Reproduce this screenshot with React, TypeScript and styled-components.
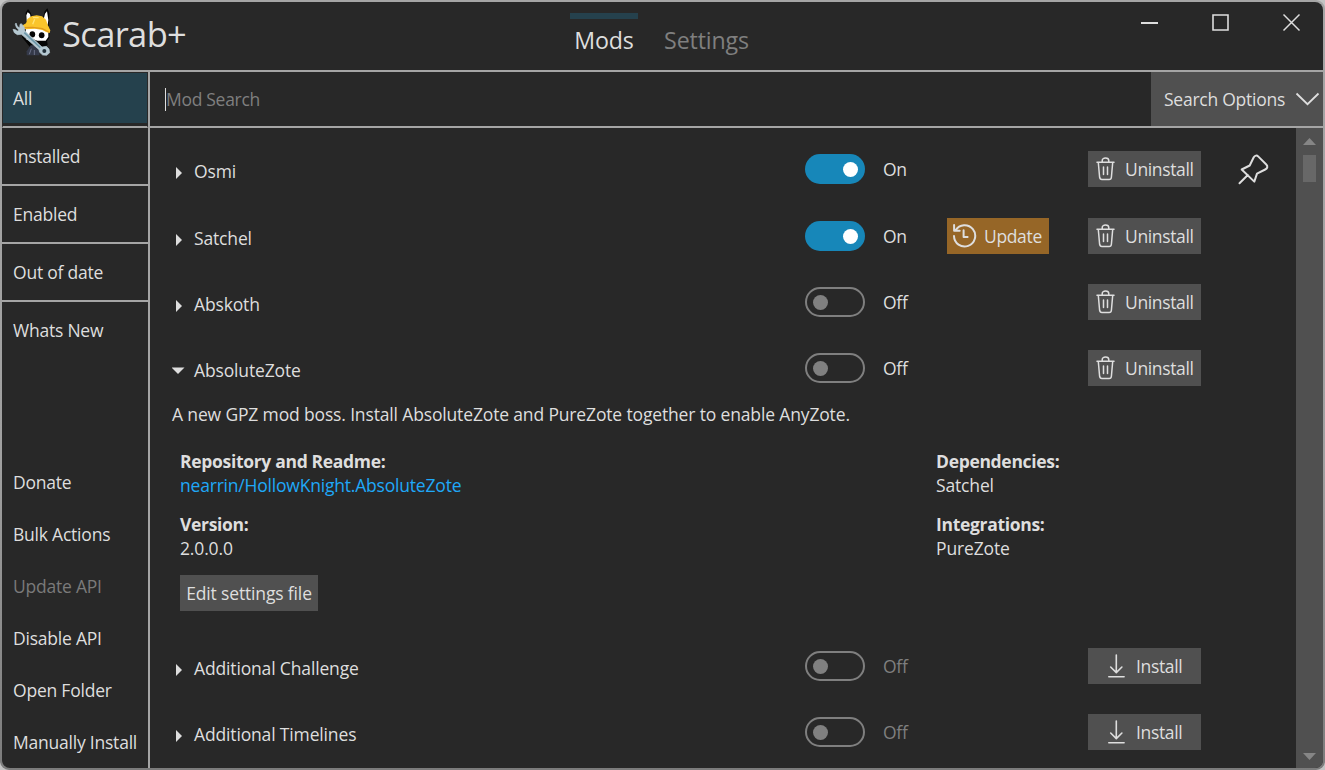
import React from "react";
import styled, { createGlobalStyle } from "styled-components";

const LINE = "#a5a5a5";
const BG = "#282828";
const PANEL = "#505050";
const TEXT = "#dedede";
const MUTED = "#7f7f7f";

const GlobalStyle = createGlobalStyle`
  * { box-sizing: border-box; }
  body { margin: 0; background: #c4c4c4; }
  button { font: inherit; color: inherit; border: 0; padding: 0; background: none; letter-spacing: inherit; }
`;

const Window = styled.div`
  width: 1325px;
  height: 770px;
  padding: 2px;
  border-radius: 9px;
  background: linear-gradient(#a5a5a5, #a0a0a0 60%, #7c7c7c);
  font-family: "Open Sans", "Noto Sans", sans-serif;
  font-size: 17.5px;
  line-height: 24px;
  letter-spacing: -0.15px;
  color: ${TEXT};
  white-space: nowrap;
`;

const Frame = styled.div`
  display: flex;
  flex-direction: column;
  height: 766px;
  overflow: hidden;
  border-radius: 8px;
  background: ${BG};
`;

const Header = styled.header`
  display: grid;
  grid-template-columns: 568px 1fr 190px;
  height: 70px;
  border-bottom: 2px solid ${LINE};
`;

const Brand = styled.div`
  display: flex;
  align-items: flex-start;
`;

const Title = styled.h1`
  margin: 9px 0 0;
  font-size: 34.5px;
  line-height: 46px;
  font-weight: 400;
  letter-spacing: -0.65px;
`;

const Tabs = styled.nav`
  display: flex;
  gap: 22px;
  padding-top: 11px;
`;

const Tab = styled.button<{ $active?: boolean }>`
  display: flex;
  flex-direction: column;
  align-items: center;
  height: 50px;
  width: ${(p) => (p.$active ? 68 : 93)}px;
  border-top: 6px solid ${(p) => (p.$active ? "#25414d" : "transparent")};
  color: ${(p) => (p.$active ? TEXT : MUTED)};
  font-size: 23.2px;
  line-height: 42px;
`;

const WindowControls = styled.div`
  display: flex;
  justify-content: space-between;
  padding: 11px 22px 0 7px;
  height: 32px;
`;

const Body = styled.div`
  display: flex;
  flex: 1;
  min-height: 0;
`;

const Sidebar = styled.aside`
  display: flex;
  flex-direction: column;
  width: 148px;
  border-right: 2px solid ${LINE};
  letter-spacing: -0.22px;
`;

const Filter = styled.button<{ $active?: boolean; $last?: boolean }>`
  height: ${(p) => (p.$active ? 56 : 58)}px;
  padding: ${(p) => (p.$active ? "0 0 3px 10px" : "0 0 0 11px")};
  border: ${(p) => (p.$active ? `1px solid ${BG}` : 0)};
  border-bottom: 2px solid ${(p) => (p.$last ? "transparent" : LINE)};
  background: ${(p) => (p.$active ? `linear-gradient(#25414d 50px, ${BG} 50px)` : "none")};
  text-align: left;
`;

const SideActions = styled.div`
  display: flex;
  flex-direction: column;
  margin-top: auto;
`;

const SideAction = styled.button<{ $disabled?: boolean }>`
  height: 52px;
  padding-left: 11px;
  text-align: left;
  color: ${(p) => (p.$disabled ? "#7a7a7a" : TEXT)};
`;

const Main = styled.main`
  display: flex;
  flex: 1;
  flex-direction: column;
  min-width: 0;
`;

const SearchBar = styled.div`
  display: flex;
  height: 56px;
  border-bottom: 2px solid ${LINE};
`;

const SearchField = styled.div`
  display: flex;
  flex: 1;
  align-items: center;
  padding-left: 15px;
  color: ${MUTED};
  letter-spacing: -0.3px;
`;

const Caret = styled.span`
  width: 1px;
  height: 23px;
  background: ${TEXT};
`;

const SearchOptions = styled.button`
  display: flex;
  align-items: center;
  justify-content: space-between;
  width: 172px;
  padding: 0 3px 0 13px;
  letter-spacing: -0.25px;
  background: ${PANEL};
`;

const Content = styled.div`
  display: flex;
  flex: 1;
  min-height: 0;
`;

const ModList = styled.div`
  flex: 1;
  padding: 23px 0 0 22px;
  overflow: hidden;
`;

const Row = styled.div<{ $gap: number }>`
  display: grid;
  grid-template-columns: 22px 611px 78px 64px 141px 113px 1fr;
  align-items: center;
  height: 36px;
  margin-bottom: ${(p) => p.$gap}px;
`;

const ArrowCell = styled.span`
  display: flex;
  padding-top: 7px;
`;

const Name = styled.span`
  padding-top: 3px;
`;

const Track = styled.span<{ $on: boolean }>`
  display: flex;
  align-items: center;
  justify-content: ${(p) => (p.$on ? "flex-end" : "flex-start")};
  width: 60px;
  height: 30px;
  padding: ${(p) => (p.$on ? "1px 7px 0" : "0 6px")};
  border: ${(p) => (p.$on ? 0 : "2px solid #7f7f7f")};
  border-radius: 15px;
  background: ${(p) => (p.$on ? "#1787b9" : "transparent")};
`;

const Knob = styled.span<{ $on: boolean }>`
  width: 15px;
  height: 15px;
  border-radius: 50%;
  background: ${(p) => (p.$on ? "#fff" : "#808080")};
`;

const State = styled.span<{ $dim?: boolean }>`
  padding-bottom: 1px;
  letter-spacing: -0.3px;
  color: ${(p) => (p.$dim ? MUTED : TEXT)};
`;

const ActionButton = styled.button<{ $tone?: "update" | "install" }>`
  display: flex;
  align-items: center;
  height: 36px;
  gap: ${(p) => (p.$tone === "update" ? 7 : p.$tone === "install" ? 11 : 9)}px;
  width: ${(p) => (p.$tone === "update" ? 102 : 113)}px;
  padding-left: ${(p) => (p.$tone === "update" ? 5 : p.$tone === "install" ? 20 : 7)}px;
  background: ${(p) => (p.$tone === "update" ? "#966627" : PANEL)};
  letter-spacing: -0.35px;
`;

const PinCell = styled.span`
  display: flex;
  padding-left: 36px;
`;

const Details = styled.section`
  height: 232px;
  margin-bottom: 30px;
  margin-top: -30px;
  padding-top: 16px;
`;

const Columns = styled.div`
  display: grid;
  grid-template-columns: 756px 1fr;
  padding: 23px 0 0 8px;
`;

const Field = styled.div`
  display: flex;
  flex-direction: column;
  height: 63px;
`;

const Caption = styled.strong`
  font-size: 17.5px;
  letter-spacing: -0.32px;
`;

const Link = styled.a`
  color: #1fa8f8;
  letter-spacing: -0.2px;
`;

const EditButton = styled.button`
  display: block;
  width: 138px;
  height: 36px;
  margin-left: 8px;
  background: ${PANEL};
`;

const ScrollBar = styled.div`
  display: flex;
  flex-direction: column;
  align-items: center;
  width: 27px;
  padding: 10px 0 8px;
  background: ${PANEL};
`;

const Thumb = styled.div`
  width: 13px;
  height: 27px;
  margin: 10px 0 auto;
  background: #686868;
`;

const Logo = () => (
  <svg width="60" height="64" viewBox="6 6 180 192">
    <path d="M78 72 77 38 84 27 92 38 98 56 128 56 134 34 142 25 148 40 146 78Z" fill="#050505" />
    <path d="M80 64 79 46 83 37 90 42 94 60ZM131 58 135 41 141 34 145 60 143 76Z" fill="#fff" />
    <path d="M72 84H148V114L141 123 143 134 132 145 108 132 92 144 66 112Z" fill="#050505" />
    <path d="M77 84H145V111L137 122H112L100 118 80 120Z" fill="#fff" />
    <ellipse cx="97" cy="103" rx="8.5" ry="9.5" fill="#050505" />
    <ellipse cx="125" cy="106" rx="8.5" ry="9" fill="#050505" />
    <path d="M92 136 80 154V166H118L120 152 106 136Z" fill="#343949" />
    <path d="m94 146-6 17m15-13v15" stroke="#6a7086" strokeWidth="3" />
    <path d="M68 76 78 70 82 57 94 49 110 46 126 49 138 59 143 74 151 91 149 99 138 96 127 90 105 86 78 88 66 84Z" fill="#fac52b" />
    <path d="m70 83 28-1 29 4 19 10" fill="none" stroke="#e09a1c" strokeWidth="4" />
    <path d="M99 53h17m-12 5-6 15" stroke="#ffe373" strokeWidth="4" />
    <path d="M48 69 52 79 59 84 60 73 64 71 72 80 75 93 126 141 139 139 147 147 149 158 140 166 128 165 119 157 117 149 64 103 52 104 43 98 39 88 46 89 52 93 57 91 49 82 46 73Z" fill="#b5c8d1" stroke="#b5c8d1" strokeWidth="2" />
    <path d="m73 98 48 45" stroke="#6d98aa" strokeWidth="5" />
    <circle cx="133" cy="153" r="6" fill="#22313b" />
  </svg>
);

const Arrow = ({ open }: { open?: boolean }) => (
  <svg width="14" height="12" viewBox="0 0 14 12">
    <path d={open ? "M-.5 1.5H12.5L6 8Z" : "M4 0 10 6 4 12Z"} fill={TEXT} />
  </svg>
);

const TrashIcon = () => (
  <svg width="21" height="26" viewBox="0 0 21 26" fill="none" stroke={TEXT} strokeWidth="1.5" strokeLinecap="round" strokeLinejoin="round">
    <path d="M2 6.2h17M7.2 6V4.7c0-1.6 1.3-2.7 3.3-2.7s3.3 1.1 3.3 2.7V6M3.3 6.5l1.3 14.7c.2 1.5 1 2.3 2.3 2.3h7.2c1.4 0 2.2-.8 2.3-2.3l1.3-14.7M8.5 11v7.5M12.5 11v7.5" />
  </svg>
);

const HistoryIcon = () => (
  <svg width="25" height="26" viewBox="0 0 25 26" fill="none" stroke={TEXT} strokeWidth="2" strokeLinecap="round" strokeLinejoin="round">
    <path d="M3.6 7.3A10.6 10.6 0 1 1 2 13M2.1 2v5.7h5.6M11.6 7.3V14h4" />
  </svg>
);

const DownloadIcon = () => (
  <svg width="17" height="24" viewBox="0 0 17 24" fill="none" stroke={TEXT} strokeWidth="1.6" strokeLinecap="round" strokeLinejoin="round">
    <path d="M8.3 1v17.5M2.7 13l5.6 5.6 5.6-5.6M.8 22.7h15.3" />
  </svg>
);

const PinIcon = () => (
  <svg width="32" height="32" viewBox="0 0 32 32" fill="none" stroke={TEXT} strokeWidth="2" strokeLinecap="round" strokeLinejoin="round">
    <path d="M2.5 30.3 10.8 22M4.7 16.5 17.3 28.6 20 20.6 28.2 16.5C30.6 15.3 31 13.3 29.3 11.5L21.4 3.6C19.8 2 17.8 2.3 16.6 4.5L12.7 12.5Z" />
  </svg>
);

interface Mod {
  name: string;
  on?: boolean;
  installed?: boolean;
  update?: boolean;
  pinned?: boolean;
  open?: boolean;
  gap?: number;
}

const mods: Mod[] = [
  { name: "Osmi", on: true, installed: true, pinned: true, gap: 31 },
  { name: "Satchel", on: true, installed: true, update: true },
  { name: "Abskoth", installed: true },
  { name: "AbsoluteZote", installed: true, open: true },
  { name: "Additional Challenge" },
  { name: "Additional Timelines" },
];

const ModDetails = () => (
  <Details>
    <div>A new GPZ mod boss. Install AbsoluteZote and PureZote together to enable AnyZote.</div>
    <Columns>
      <Field><Caption>Repository and Readme:</Caption><Link>nearrin/HollowKnight.AbsoluteZote</Link></Field>
      <Field><Caption>Dependencies:</Caption><span>Satchel</span></Field>
      <Field><Caption>Version:</Caption><span>2.0.0.0</span></Field>
      <Field><Caption>Integrations:</Caption><span>PureZote</span></Field>
    </Columns>
    <EditButton>Edit settings file</EditButton>
  </Details>
);

const ModRow = ({ mod }: { mod: Mod }) => (
  <>
    <Row $gap={mod.gap ?? 30}>
      <ArrowCell><Arrow open={mod.open} /></ArrowCell>
      <Name>{mod.name}</Name>
      <Track $on={!!mod.on}><Knob $on={!!mod.on} /></Track>
      <State $dim={!mod.installed}>{mod.on ? "On" : "Off"}</State>
      <span>{mod.update && <ActionButton $tone="update"><HistoryIcon />Update</ActionButton>}</span>
      {mod.installed
        ? <ActionButton><TrashIcon />Uninstall</ActionButton>
        : <ActionButton $tone="install"><DownloadIcon />Install</ActionButton>}
      <PinCell>{mod.pinned && <PinIcon />}</PinCell>
    </Row>
    {mod.open && <ModDetails />}
  </>
);

const filters = ["All", "Installed", "Enabled", "Out of date", "Whats New"];
const actions = ["Donate", "Bulk Actions", "Update API", "Disable API", "Open Folder", "Manually Install"];

export default function App() {
  return (
    <>
      <GlobalStyle />
      <Window>
        <Frame>
          <Header>
            <Brand><Logo /><Title>Scarab+</Title></Brand>
            <Tabs><Tab $active>Mods</Tab><Tab>Settings</Tab></Tabs>
            <WindowControls>
              <svg width="19" height="19"><path d="M1 10h17" stroke={TEXT} strokeWidth="2" /></svg>
              <svg width="19" height="19"><path d="M2 2h15v15H2Z" fill="none" stroke={TEXT} strokeWidth="1.6" /></svg>
              <svg width="19" height="19"><path d="m1.5 1.5 16 16m0-16-16 16" stroke={TEXT} strokeWidth="1.5" /></svg>
            </WindowControls>
          </Header>
          <Body>
            <Sidebar>
              {filters.map((label, i) => (
                <Filter key={label} $active={i === 0} $last={i === filters.length - 1}>{label}</Filter>
              ))}
              <SideActions>
                {actions.map((label) => (
                  <SideAction key={label} $disabled={label === "Update API"}>{label}</SideAction>
                ))}
              </SideActions>
            </Sidebar>
            <Main>
              <SearchBar>
                <SearchField><Caret />Mod Search</SearchField>
                <SearchOptions>
                  Search Options
                  <svg width="25" height="14"><path d="m1.5 1.5 11 10.7 11-10.7" fill="none" stroke={TEXT} strokeWidth="1.8" /></svg>
                </SearchOptions>
              </SearchBar>
              <Content>
                <ModList>{mods.map((mod) => <ModRow key={mod.name} mod={mod} />)}</ModList>
                <ScrollBar>
                  <svg width="13" height="7"><path d="M0 7 6.5 0 13 7Z" fill="#868686" /></svg>
                  <Thumb />
                  <svg width="13" height="7"><path d="M0 0H13L6.5 7Z" fill="#868686" /></svg>
                </ScrollBar>
              </Content>
            </Main>
          </Body>
        </Frame>
      </Window>
    </>
  );
}
